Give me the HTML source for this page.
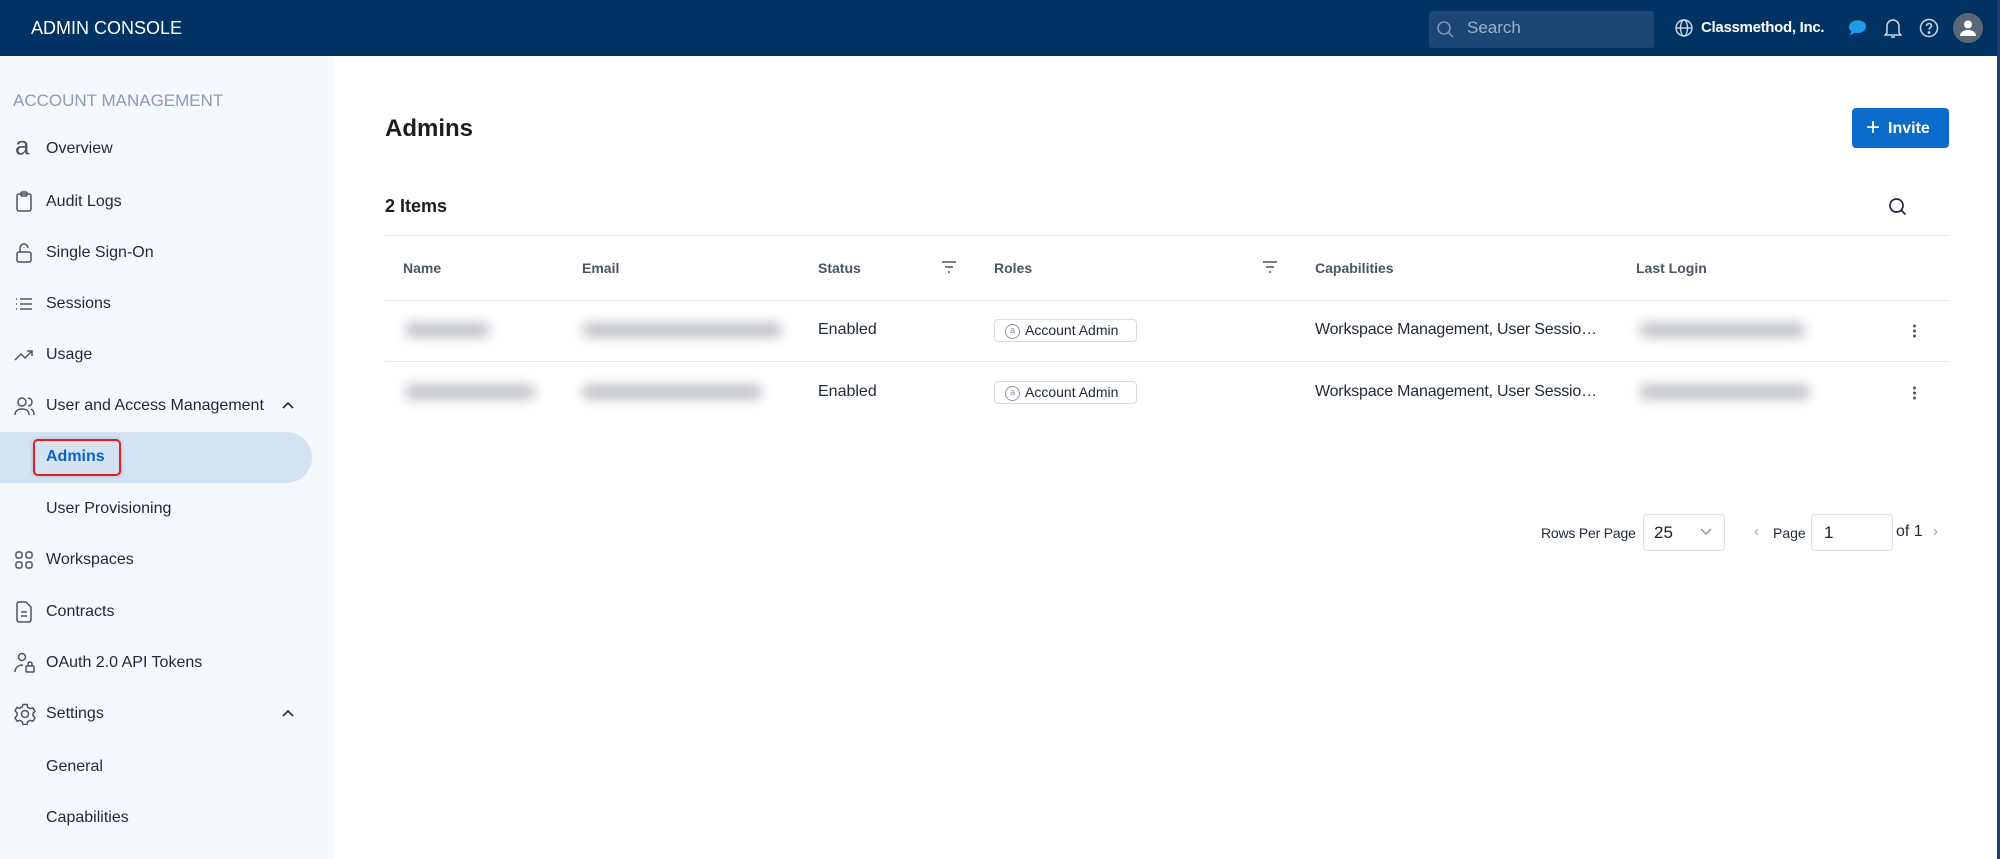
<!DOCTYPE html>
<html><head><meta charset="utf-8"><style>
*{box-sizing:border-box;margin:0;padding:0}
body{width:2000px;height:859px;overflow:hidden;font-family:"Liberation Sans",sans-serif;background:#fff;position:relative;color:#1d1d1f}
.hdr{position:absolute;left:0;top:0;width:2000px;height:56px;background:#003263}
.a{position:absolute;white-space:nowrap}
.side{position:absolute;left:0;top:56px;width:333px;height:803px;background:#f5f8fd}
.nav{position:absolute;left:46px;font-size:16px;color:#1f2937;transform:translateY(-50%);white-space:nowrap}
.ic{position:absolute;left:14px;transform:translateY(-50%)}
.th{position:absolute;top:268px;transform:translateY(-50%);font-size:14px;color:#4b5563;font-weight:bold;white-space:nowrap}
.td{position:absolute;transform:translateY(-50%);font-size:16px;color:#1f2937;white-space:nowrap}
.line{position:absolute;left:385px;width:1564px;height:1px;background:#e6e9ef}
.blur{position:absolute;height:14px;background:#b9bcc2;filter:blur(6px);border-radius:7px}
.chip{position:absolute;left:994px;width:143px;height:23px;border:1px solid #d6dbe4;border-radius:4px;font-size:14px;line-height:21px;padding-left:30px;color:#1f2937;white-space:nowrap}
.chip:before{content:"a";position:absolute;left:10px;top:4px;width:13px;height:13px;border:1px solid #8893a6;border-radius:50%;font-size:9px;line-height:11px;text-align:center;color:#8893a6}
.keb{position:absolute;left:1913px;width:4px;transform:translateY(-50%)}
.keb i{display:block;width:3px;height:3px;background:#4b5563;border-radius:50%;margin:2px 0}
</style></head><body>
<div class="hdr">
<div class="a" style="left:31px;top:18px;color:#fff;font-size:18px">ADMIN CONSOLE</div>
<div class="a" style="left:1429px;top:11px;width:225px;height:37px;background:#1c4673;border-radius:3px"></div>
<svg class="a" style="left:1436px;top:20px" width="20" height="20" viewBox="0 0 20 20"><circle cx="8" cy="8" r="6" fill="none" stroke="#8094b0" stroke-width="1.6"/><path d="M12.5 12.5l4.5 4.5" stroke="#8094b0" stroke-width="1.6"/></svg>
<div class="a" style="left:1467px;top:18px;color:#9fb0c8;font-size:17px">Search</div>
<svg class="a" style="left:1674px;top:18px" width="20" height="20" viewBox="0 0 20 20" fill="none" stroke="#cfd8e6" stroke-width="1.4"><circle cx="10" cy="10" r="8"/><ellipse cx="10" cy="10" rx="3.5" ry="8"/><path d="M2 10h16"/></svg>
<div class="a" style="left:1701px;top:19px;color:#fff;font-size:15px;font-weight:bold;letter-spacing:-0.3px">Classmethod, Inc.</div>
<svg class="a" style="left:1848px;top:19px" width="19" height="18" viewBox="0 0 20 18"><path d="M10 1C5 1 1 4 1 8c0 2 1 3.5 2.5 4.5L2 17l5-3c1 .3 2 .4 3 .4 5 0 9-3 9-7S15 1 10 1z" fill="#1e9be9"/></svg>
<svg class="a" style="left:1884px;top:17px" width="18" height="22" viewBox="0 0 18 22" fill="none" stroke="#cfd8e6" stroke-width="1.5"><path d="M3 16V9a6 6 0 0112 0v7l2 2H1z"/><path d="M7 20h4"/></svg>
<svg class="a" style="left:1919px;top:18px" width="20" height="20" viewBox="0 0 20 20" fill="none" stroke="#cfd8e6" stroke-width="1.5"><circle cx="10" cy="10" r="8.5"/><path d="M7.5 8a2.5 2.5 0 115 0c0 1.5-2.5 2-2.5 3.5"/><circle cx="10" cy="14.5" r=".6" fill="#cfd8e6"/></svg>
<div class="a" style="left:1953px;top:13px;width:30px;height:30px;border-radius:50%;background:#5a6575"></div>
<svg class="a" style="left:1958px;top:18px" width="20" height="20" viewBox="0 0 20 20"><circle cx="10" cy="6.5" r="4" fill="#fff"/><path d="M2 18c0-4 4-6 8-6s8 2 8 6z" fill="#fff"/></svg>
</div>
<div class="a" style="left:1997px;top:0;width:3px;height:859px;background:#1f3c6b"></div>
<div class="side">
<div class="a" style="left:13px;top:35px;font-size:17px;color:#8a9cb6">ACCOUNT MANAGEMENT</div>
<div class="a" style="left:0;top:376px;width:312px;height:51px;background:#d3e3f3;border-radius:0 26px 26px 0"></div>
<div class="a" style="left:33px;top:383px;width:88px;height:37px;border:2px solid #e02020;border-radius:5px;box-shadow:0 0 4px rgba(0,0,0,.2)"></div>
</div>
<div class="a" style="left:0;top:0">
<div class="ic" style="top:146px;font-size:26px;color:#4b5563;left:15px">a</div>
<div class="nav" style="top:149px">Overview</div>
<svg class="ic" style="top:202px" width="20" height="22" viewBox="0 0 20 22" fill="none" stroke="#4b5563" stroke-width="1.5"><rect x="3" y="3" width="14" height="17" rx="2"/><rect x="7" y="1" width="6" height="4" rx="1"/></svg>
<div class="nav" style="top:202px">Audit Logs</div>
<svg class="ic" style="top:253px" width="20" height="22" viewBox="0 0 20 22" fill="none" stroke="#4b5563" stroke-width="1.5"><rect x="3" y="10" width="14" height="10" rx="2"/><path d="M6 10V6a4 4 0 018 0"/></svg>
<div class="nav" style="top:253px">Single Sign-On</div>
<svg class="ic" style="top:304px" width="20" height="20" viewBox="0 0 20 20" stroke="#4b5563" stroke-width="1.5"><path d="M2 5h1M2 10h1M2 15h1M6 5h12M6 10h12M6 15h12"/></svg>
<div class="nav" style="top:304px">Sessions</div>
<svg class="ic" style="top:355px" width="20" height="20" viewBox="0 0 20 20" fill="none" stroke="#4b5563" stroke-width="1.5"><path d="M1 15l6-6 4 4 7-7M13 6h5v5"/></svg>
<div class="nav" style="top:355px">Usage</div>
<svg class="ic" style="top:406px" width="22" height="20" viewBox="0 0 22 20" fill="none" stroke="#4b5563" stroke-width="1.5"><circle cx="8" cy="6" r="4"/><path d="M1 19c0-4 3-6 7-6s7 2 7 6M14 2a4 4 0 010 8M17 13c2 1 3 3 3 6"/></svg>
<div class="nav" style="top:406px">User and Access Management</div>
<svg class="a" style="left:281px;top:400px" width="14" height="10" viewBox="0 0 14 10" fill="none" stroke="#1f2937" stroke-width="1.6"><path d="M2 8l5-5 5 5"/></svg>
<div class="nav" style="top:457px;color:#0b62c4;font-weight:bold">Admins</div>
<div class="nav" style="top:509px">User Provisioning</div>
<svg class="ic" style="top:560px" width="20" height="20" viewBox="0 0 20 20" fill="none" stroke="#4b5563" stroke-width="1.5"><rect x="2" y="2" width="6" height="6" rx="2"/><rect x="12" y="2" width="6" height="6" rx="2"/><rect x="2" y="12" width="6" height="6" rx="2"/><rect x="12" y="12" width="6" height="6" rx="2"/></svg>
<div class="nav" style="top:560px">Workspaces</div>
<svg class="ic" style="top:612px" width="20" height="22" viewBox="0 0 20 22" fill="none" stroke="#4b5563" stroke-width="1.5"><path d="M3 3a2 2 0 012-2h7l5 5v13a2 2 0 01-2 2H5a2 2 0 01-2-2z"/><path d="M7 11h6M7 15h6"/></svg>
<div class="nav" style="top:612px">Contracts</div>
<svg class="ic" style="top:663px" width="22" height="22" viewBox="0 0 22 22" fill="none" stroke="#4b5563" stroke-width="1.5"><circle cx="8" cy="5" r="3.5"/><path d="M1 20c0-4 3-7 8-7"/><rect x="12" y="14" width="8" height="6" rx="1"/><path d="M14 14v-2a2 2 0 014 0v2"/></svg>
<div class="nav" style="top:663px">OAuth 2.0 API Tokens</div>
<svg class="ic" style="top:714px" width="22" height="22" viewBox="0 0 22 22" fill="none" stroke="#4b5563" stroke-width="1.5"><circle cx="11" cy="11" r="3.5"/><path d="M9 1.5h4l.7 2.8 2.5 1.4 2.8-.8 2 3.4-2 2v2.4l2 2-2 3.4-2.8-.8-2.5 1.4-.7 2.8H9l-.7-2.8-2.5-1.4-2.8.8-2-3.4 2-2V9.8l-2-2 2-3.4 2.8.8 2.5-1.4z"/></svg>
<div class="nav" style="top:714px">Settings</div>
<svg class="a" style="left:281px;top:708px" width="14" height="10" viewBox="0 0 14 10" fill="none" stroke="#1f2937" stroke-width="1.6"><path d="M2 8l5-5 5 5"/></svg>
<div class="nav" style="top:767px">General</div>
<div class="nav" style="top:818px">Capabilities</div>
</div>

<div class="a" style="left:385px;top:115px;font-size:24px;font-weight:bold;color:#1d1d1f">Admins</div>
<div class="a" style="left:1852px;top:108px;width:97px;height:40px;background:#0b6bcb;border-radius:4px;color:#fff;font-size:16px;font-weight:bold;line-height:40px;padding-left:14px"><span style="font-size:24px;font-weight:normal;vertical-align:-2px;margin-right:8px">+</span>Invite</div>
<div class="a" style="left:385px;top:196px;font-size:18px;font-weight:bold">2 Items</div>
<svg class="a" style="left:1888px;top:197px" width="20" height="20" viewBox="0 0 20 20" fill="none" stroke="#1f2937" stroke-width="1.7"><circle cx="8.5" cy="8.5" r="6.5"/><path d="M13.5 13.5l4 4"/></svg>
<div class="line" style="top:235px"></div>
<div class="th" style="left:403px">Name</div>
<div class="th" style="left:582px">Email</div>
<div class="th" style="left:818px">Status</div>
<div class="th" style="left:994px">Roles</div>
<div class="th" style="left:1315px">Capabilities</div>
<div class="th" style="left:1636px">Last Login</div>
<svg class="a" style="left:941px;top:260px" width="16" height="14" viewBox="0 0 16 14" stroke="#4b5563" stroke-width="1.6"><path d="M1 2h14M4 7h8M7 12h2"/></svg>
<svg class="a" style="left:1262px;top:260px" width="16" height="14" viewBox="0 0 16 14" stroke="#4b5563" stroke-width="1.6"><path d="M1 2h14M4 7h8M7 12h2"/></svg>
<div class="line" style="top:300px"></div>
<div class="blur" style="left:405px;top:323px;width:85px"></div>
<div class="blur" style="left:582px;top:323px;width:200px"></div>
<div class="blur" style="left:405px;top:385px;width:130px"></div>
<div class="blur" style="left:582px;top:385px;width:180px"></div>
<div class="blur" style="left:1640px;top:323px;width:165px"></div>
<div class="blur" style="left:1640px;top:385px;width:170px"></div>
<div class="td" style="left:818px;top:330px">Enabled</div>
<div class="td" style="left:818px;top:392px">Enabled</div>
<div class="chip" style="top:319px">Account Admin</div>
<div class="chip" style="top:381px">Account Admin</div>
<div class="td" style="left:1315px;top:330px;letter-spacing:-0.2px">Workspace Management, User Sessio…</div>
<div class="td" style="left:1315px;top:392px;letter-spacing:-0.2px">Workspace Management, User Sessio…</div>
<div class="keb" style="top:331px"><i></i><i></i><i></i></div>
<div class="keb" style="top:393px"><i></i><i></i><i></i></div>
<div class="line" style="top:361px"></div>
<div class="a" style="left:1541px;top:525px;font-size:14px;color:#1f2937;letter-spacing:-0.2px">Rows Per Page</div>
<div class="a" style="left:1643px;top:514px;width:82px;height:37px;border:1px solid #dde3ec;border-radius:4px;font-size:17px;line-height:35px;padding-left:10px">25</div>
<svg class="a" style="left:1700px;top:528px" width="12" height="8" viewBox="0 0 12 8" fill="none" stroke="#8893a6" stroke-width="1.5"><path d="M1 1l5 5 5-5"/></svg>
<div class="a" style="left:1754px;top:523px;font-size:15px;color:#9aa3b2">‹</div>
<div class="a" style="left:1773px;top:525px;font-size:14px;color:#1f2937">Page</div>
<div class="a" style="left:1811px;top:514px;width:82px;height:37px;border:1px solid #dde3ec;border-radius:4px;font-size:17px;line-height:35px;padding-left:12px">1</div>
<div class="a" style="left:1896px;top:523px;font-size:16px;color:#1f2937">of 1</div>
<div class="a" style="left:1933px;top:523px;font-size:15px;color:#9aa3b2">›</div>
</body></html>
